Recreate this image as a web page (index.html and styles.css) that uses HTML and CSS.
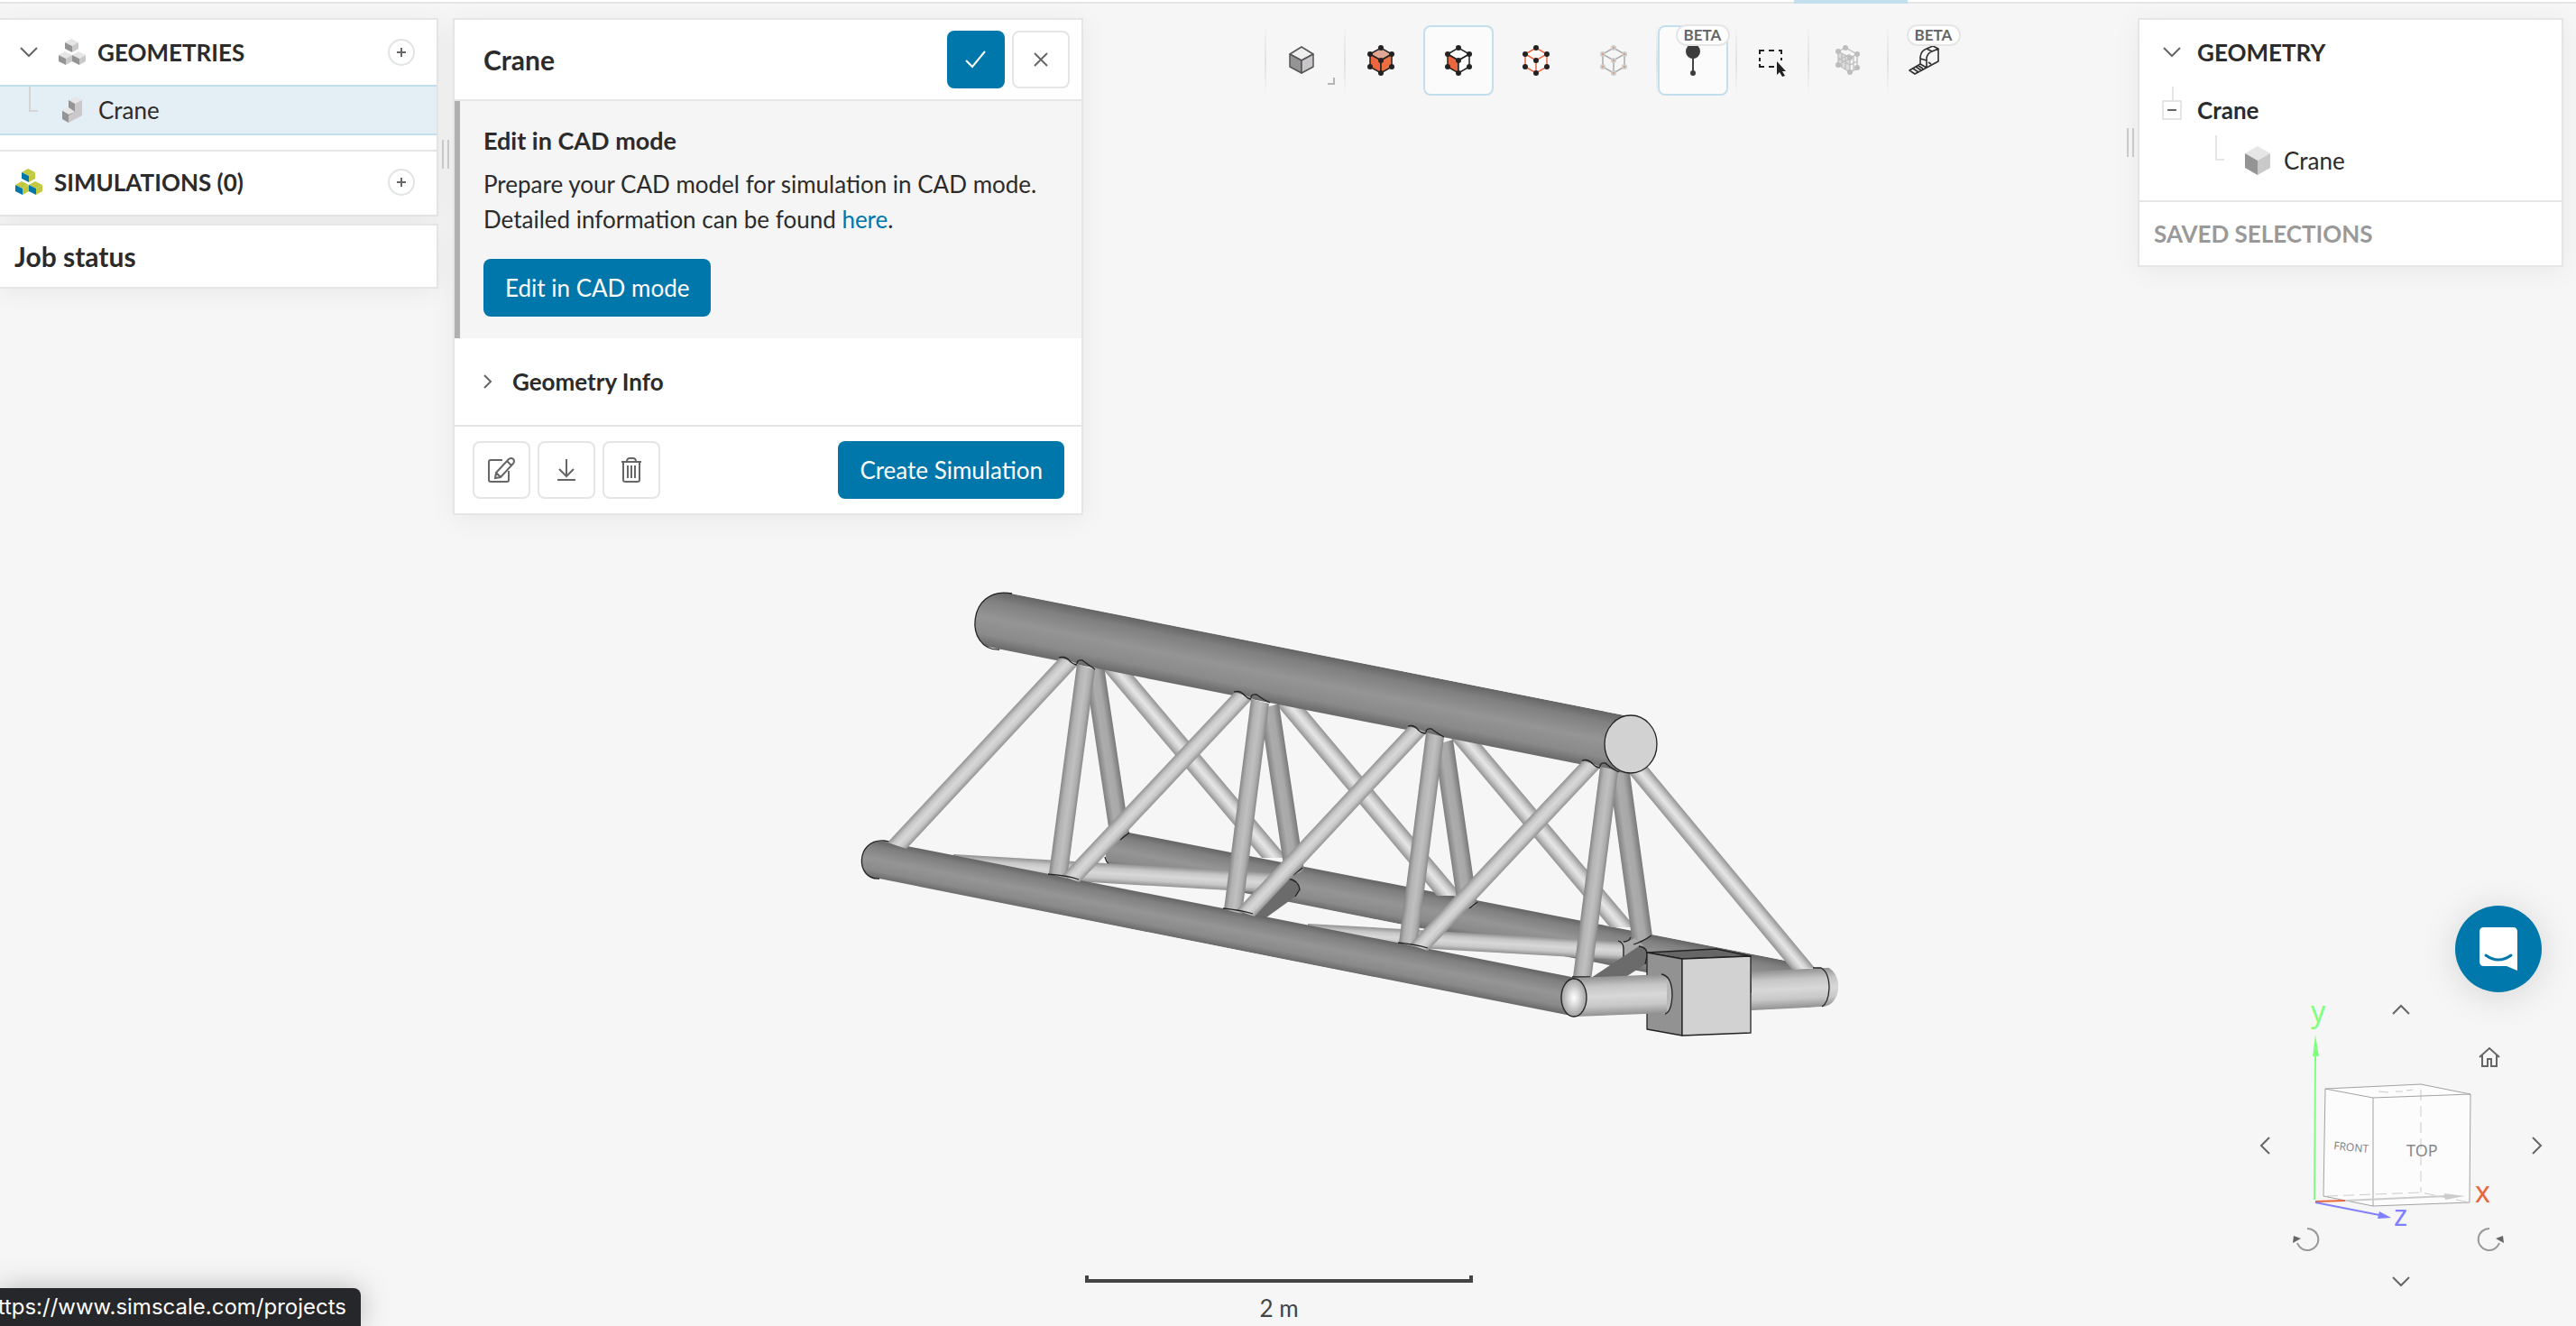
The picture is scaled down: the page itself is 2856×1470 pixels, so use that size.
FILE: index.html
```html
<!DOCTYPE html>
<html lang="en">
<head>
<meta charset="utf-8">
<meta name="viewport" content="width=device-width, initial-scale=1">
<title>Crane - SimScale Workbench</title>
<link rel="stylesheet" href="styles.css">
</head>
<body>
<svg class="defs" aria-hidden="true">
  <defs>
    <g id="cubelet">
      <path d="M0 4 7 0 15 4 8 8z" fill="var(--cube-top)"/>
      <path d="M0 4 8 8V15L0 11z" fill="var(--cube-left)"/>
      <path d="M8 8 15 4V11L8 15z" fill="var(--cube-right)"/>
    </g>
    <g id="cubes">
      <use href="#cubelet" x="7" y="0"/>
      <use href="#cubelet" x="0" y="14"/>
      <use href="#cubelet" x="15" y="14"/>
    </g>
  </defs>
</svg>
<div class="app">
  <header class="topbar"><div class="progress"></div></header>

  <svg class="scene" viewBox="0 0 2856 1470" role="img" aria-label="Crane geometry">
    <defs>
      <linearGradient id="g-dark" x2="0" y2="1">
        <stop offset="0" stop-color="#646464"/><stop offset=".18" stop-color="#808080"/><stop offset=".5" stop-color="#959595"/><stop offset=".8" stop-color="#8a8a8a"/><stop offset="1" stop-color="#696969"/>
      </linearGradient>
      <linearGradient id="g-mid" x2="0" y2="1">
        <stop offset="0" stop-color="#808080"/><stop offset=".35" stop-color="#acacac"/><stop offset=".65" stop-color="#a8a8a8"/><stop offset="1" stop-color="#787878"/>
      </linearGradient>
      <linearGradient id="g-soft" x2="0" y2="1">
        <stop offset="0" stop-color="#868686"/><stop offset=".25" stop-color="#b2b2b2"/><stop offset=".55" stop-color="#c0c0c0"/><stop offset=".8" stop-color="#aeaeae"/><stop offset="1" stop-color="#888"/>
      </linearGradient>
      <linearGradient id="g-light" x2="0" y2="1">
        <stop offset="0" stop-color="#929292"/><stop offset=".25" stop-color="#c6c6c6"/><stop offset=".5" stop-color="#d8d8d8"/><stop offset=".75" stop-color="#c8c8c8"/><stop offset="1" stop-color="#929292"/>
      </linearGradient>
      <linearGradient id="g-bright" x2="0" y2="1">
        <stop offset="0" stop-color="#929292"/><stop offset=".3" stop-color="#cfcfcf"/><stop offset=".5" stop-color="#e6e6e6"/><stop offset=".7" stop-color="#cdcdcd"/><stop offset="1" stop-color="#929292"/>
      </linearGradient>
      <radialGradient id="g-ball">
        <stop offset="0" stop-color="#fff"/><stop offset=".4" stop-color="#dcdcdc"/><stop offset="1" stop-color="#a0a0a0"/>
      </radialGradient>
      <clipPath id="c-upper"><path d="M1122 658C1072 648 1068 722 1108 720L1806 862V794z"/></clipPath>
      <clipPath id="c-front"><path d="M980 932C948 930 948 976 975 974L1747 1128V1083z"/></clipPath>
      <clipPath id="c-rear"><path d="M1240 919 1226 926V950L1230 960 1990 1112V1067z"/></clipPath>
      <clipPath id="c-end"><path d="M1942 1070H2019C2045 1073 2044 1116 2019 1116L1942 1122z"/></clipPath>
      <rect id="t-dark" width="1" height="1" fill="url(#g-dark)"/>
      <rect id="t-mid" width="1" height="1" fill="url(#g-mid)"/>
      <rect id="t-soft" width="1" height="1" fill="url(#g-soft)"/>
      <rect id="t-light" width="1" height="1" fill="url(#g-light)"/>
      <rect id="t-bright" width="1" height="1" fill="url(#g-bright)"/>
    </defs>

    <!-- rear chord -->
    <g clip-path="url(#c-rear)"><use href="#t-dark" transform="matrix(769 150 0 43 1221 917)"/></g>
    <path class="edge" d="M1225 950q1 5 5 9"/>

    <!-- rear verticals and diagonals -->
    <use href="#t-bright" transform="matrix(177 210 -28 0 1250 741)"/>
    <use href="#t-bright" transform="matrix(178 212 -28 0 1443 781)"/>
    <use href="#t-bright" transform="matrix(176 209 -28 0 1637 819)"/>
    <use href="#t-bright" transform="matrix(192 231 -25 2 1820 842)"/>
    <use href="#t-mid" transform="matrix(28 186 21 -6 1203 744)"/>
    <use href="#t-mid" transform="matrix(28 186 21 -6 1397 786)"/>
    <use href="#t-mid" transform="matrix(27 184 21 -6 1590 826)"/>
    <use href="#t-mid" transform="matrix(26 188 22 -8 1784 858)"/>
    <path class="edge" d="M1242 931 1252 923M1434 970 1444 962M1629 1007 1638 1000"/>

    <!-- floor braces -->
    <use href="#t-light" transform="matrix(373 22 0 22 1057 947)"/>
    <path d="M1798 1045q10-2 14-5l10 8-8 14-14 6q-3-10-2-23z" fill="#a8a8a8"/>
    <use href="#t-light" transform="matrix(349 20 0 20 1450 1024)"/>
    <path class="edge" d="M1794 1043q6 2 6 8v13M1800 1044q6 0 8-5M1811 1047q10-3 20-10"/>
    <path d="M1364 1020 1428 974Q1440 976 1441 986L1436 994 1400 1020z" fill="#6b6b6b"/>
    <path class="edge" d="M1428 974Q1440 976 1441 986L1436 994"/>
    <path d="M1764 1084 1817 1049Q1827 1050 1826 1060L1824 1069 1798 1086z" fill="#6b6b6b"/>
    <path class="edge" d="M1817 1049Q1827 1050 1826 1060L1824 1069"/>

    <!-- front chord -->
    <g clip-path="url(#c-front)"><use href="#t-dark" transform="matrix(797 157 0 43 950 927)"/></g>
    <path class="edge" d="M1008 937 980 932C948 930 948 976 975 974"/>

    <!-- upper chord -->
    <g clip-path="url(#c-upper)"><use href="#t-dark" transform="matrix(731 145 0 64 1075 649)"/></g>
    <path class="edge" d="M1122 658C1072 648 1068 722 1108 720"/>
    <ellipse class="face" cx="1808" cy="825" rx="29" ry="32" fill="#d2d2d2"/>

    <!-- front verticals -->
    <use href="#t-soft" transform="matrix(-31 232 20 6 1194 736)"/>
    <use href="#t-soft" transform="matrix(-30 233 20 5 1387 775)"/>
    <use href="#t-soft" transform="matrix(-30 233 20 5 1581 812)"/>
    <use href="#t-soft" transform="matrix(-30 233 20 4 1774 850)"/>
    <!-- front diagonals -->
    <use href="#t-light" transform="matrix(-191 205 21 7 1175 729)"/>
    <use href="#t-light" transform="matrix(-192 204 20 7 1369 767)"/>
    <use href="#t-light" transform="matrix(-191 204 20 7 1562 805)"/>
    <use href="#t-light" transform="matrix(-192 204 20 7 1755 843)"/>
    <path class="edge" d="M1174 729q8-2 12 4 5 4 8 4M1194 736q0-5 6-4 8 6 14 10M1368 767q7-2 12 4 4 4 7 4M1387 774q0-5 6-4 8 6 15 9M1561 805q7-2 11 4 4 4 9 4M1581 812q0-5 6-4 8 6 14 9M1754 843q7-2 12 4 4 4 8 4M1774 850q0-5 6-4 6 6 15 10"/>
    <path class="edge" d="M1162 969q24 2 34 6M1356 1007q20 2 33 6M1550 1045q20 2 33 6M1743 1083h20"/>

    <!-- hook block and cross bar -->
    <path class="face" d="M1826 1056 1903 1052 1941 1060 1865 1063z" fill="#666"/>
    <path class="face" d="M1826 1056 1865 1063V1148L1826 1141z" fill="#929292"/>
    <path class="face" d="M1865 1063 1941 1060V1145L1865 1148z" fill="#d2d2d2"/>
    <path d="M1844 1080Q1854 1085 1854 1104 1853 1122 1844 1124z" fill="#b8b8b8"/>
    <use href="#t-light" transform="matrix(102 -4 0 43 1746 1084)"/>
    <path class="edge" d="M1842 1080Q1854 1082 1854 1104 1853 1122 1846 1124"/>
    <ellipse class="face" cx="1745" cy="1106" rx="14" ry="21" fill="url(#g-ball)"/>
    <g clip-path="url(#c-end)"><use href="#t-light" transform="matrix(100 -5 0 43 1942 1077)"/></g>
    <path class="edge" d="M2010 1073 2019 1073Q2028 1078 2028 1096 2027 1112 2020 1116"/>
  </svg>

  <main class="workspace">
    <aside class="left">
      <nav class="card tree" aria-label="Project tree">
        <div class="row head">
          <button class="toggle" aria-label="Collapse geometries"><svg width="20" height="12"><path d="M1 1 10 10 19 1"/></svg></button>
          <svg class="cubes grey" width="30" height="30"><use href="#cubes"/></svg>
          <h2>GEOMETRIES</h2>
          <button class="add" aria-label="Add geometry"><svg width="12" height="12"><path d="M6 1V11M1 6H11"/></svg></button>
        </div>
        <a class="row selected" href="#crane">
          <span class="branch"></span>
          <svg class="grey part" width="22" height="30"><path d="M7 4 15 0 22 4 14 8z" fill="var(--cube-top)"/><path d="M7 4 14 8V19L8 22 0 18V16L7 13z" fill="var(--cube-left)"/><path d="M14 8 22 4V21L7 29V21L14 17z" fill="var(--cube-right)"/><path d="M0 16 7 12 14 17 7 20z" fill="var(--cube-top)"/><path d="M0 16 7 20V29L0 25z" fill="var(--cube-left)"/></svg>
          <span>Crane</span>
        </a>
        <div class="row sims">
          <svg class="cubes colour" width="30" height="30"><use href="#cubes"/></svg>
          <h2>SIMULATIONS (0)</h2>
          <button class="add" aria-label="Add simulation"><svg width="12" height="12"><path d="M6 1V11M1 6H11"/></svg></button>
        </div>
      </nav>
      <section class="card jobs"><h2>Job status</h2></section>
    </aside>
    <div class="grip grip-left"></div>

    <section class="card details">
      <header class="details-head">
        <h2>Crane</h2>
        <button class="btn primary square" aria-label="Apply"><svg width="26" height="22"><path d="M2 12 9 19 23 2"/></svg></button>
        <button class="btn square" aria-label="Close"><svg width="16" height="16"><path d="M1 1 15 15M15 1 1 15"/></svg></button>
      </header>
      <div class="cad">
        <h3>Edit in CAD mode</h3>
        <p>Prepare your CAD model for simulation in CAD mode. Detailed information can be found <a href="#docs">here</a>.</p>
        <button class="btn primary">Edit in CAD mode</button>
      </div>
      <button class="info"><svg width="10" height="16"><path d="M1 1 8 8 1 15"/></svg>Geometry Info</button>
      <footer class="details-foot">
        <button class="btn square" aria-label="Rename"><svg width="32" height="32"><path d="M17 5H4Q2 5 2 7V27Q2 29 4 29H22Q24 29 24 27V17M9 25 10 19 24 4Q27 2 29 4 31 6 29 9L15 24zM22 6 27 11M10 19 15 24"/></svg></button>
        <button class="btn square" aria-label="Download"><svg width="22" height="26"><path d="M11 1V20M3 12 11 20 19 12M1 24H21"/></svg></button>
        <button class="btn square" aria-label="Delete"><svg width="24" height="28"><path d="M1 5H23M7 5Q7 1 10 1H14Q17 1 17 5M3 5V25Q3 27 5 27H19Q21 27 21 25V5M8 9V23M12 9V23M16 9V23"/></svg></button>
        <button class="btn primary create">Create Simulation</button>
      </footer>
    </section>

    <div class="tools" role="toolbar" aria-label="Viewer tools">
      <div class="group">
        <button class="tool" aria-label="Render mode"><svg width="36" height="36"><g stroke="#555" stroke-width="1.5" stroke-linejoin="round"><path d="M5 11 18 3 31 11 18 18z" fill="#eee"/><path d="M5 11 18 18V32L5 25z" fill="#949494"/><path d="M18 18 31 11V25L18 32z" fill="#c8c6c8"/></g></svg><span class="corner"></span></button>
      </div>
      <div class="group">
        <button class="tool" aria-label="Select volumes"><svg width="36" height="36"><g stroke="#222" stroke-width="1.5"><path d="M6 11 18 4 30 11 18 18z" fill="#e0a794"/><path d="M6 11 18 18V32L6 25z" fill="#ec6640"/><path d="M18 18 30 11V25L18 32z" fill="#ec6e40"/></g><g fill="#222"><circle cx="18" cy="4" r="3"/><circle cx="6" cy="11" r="3"/><circle cx="30" cy="11" r="3"/><circle cx="18" cy="18" r="3"/><circle cx="6" cy="25" r="3"/><circle cx="30" cy="25" r="3"/><circle cx="18" cy="32" r="3"/></g></svg></button>
        <button class="tool active" aria-label="Select faces" aria-pressed="true"><svg width="36" height="36"><g stroke="#222" stroke-width="1.5"><path d="M6 11 18 4 30 11 18 18z" fill="#fff"/><path d="M6 11 18 18V32L6 25z" fill="#ec6640"/><path d="M18 18 30 11V25L18 32z" fill="#fff"/></g><g fill="#222"><circle cx="18" cy="4" r="3"/><circle cx="6" cy="11" r="3"/><circle cx="30" cy="11" r="3"/><circle cx="18" cy="18" r="3"/><circle cx="6" cy="25" r="3"/><circle cx="30" cy="25" r="3"/><circle cx="18" cy="32" r="3"/></g></svg></button>
        <button class="tool" aria-label="Select edges"><svg width="36" height="36"><path d="M6 11 18 4 30 11 18 18zV25L18 32 30 25V11M18 18V32" fill="#fff" stroke="#ec6640" stroke-width="1.5"/><g fill="#222"><circle cx="18" cy="4" r="3"/><circle cx="6" cy="11" r="3"/><circle cx="30" cy="11" r="3"/><circle cx="18" cy="18" r="3"/><circle cx="6" cy="25" r="3"/><circle cx="30" cy="25" r="3"/><circle cx="18" cy="32" r="3"/></g></svg></button>
        <button class="tool" aria-label="Select vertices" disabled><svg width="36" height="36"><path d="M6 11 18 4 30 11 18 18zV25L18 32 30 25V11M18 18V32" fill="none" stroke="#aaa" stroke-width="1.5"/><g fill="#ccc"><circle cx="18" cy="4" r="3"/><circle cx="6" cy="11" r="3"/><circle cx="30" cy="11" r="3"/><circle cx="18" cy="18" r="3"/><circle cx="6" cy="25" r="3"/><circle cx="30" cy="25" r="3"/><circle cx="18" cy="32" r="3"/></g><g fill="#ec8868"><circle cx="18" cy="4" r="1"/><circle cx="6" cy="11" r="1"/><circle cx="30" cy="11" r="1"/><circle cx="18" cy="18" r="1"/><circle cx="6" cy="25" r="1"/><circle cx="30" cy="25" r="1"/><circle cx="18" cy="32" r="1"/></g></svg></button>
      </div>
      <div class="group">
        <button class="tool active" aria-label="Probe point" aria-pressed="true"><svg width="36" height="36"><path d="M18 8V31" stroke="#444" stroke-width="2"/><circle cx="18" cy="8" r="8" fill="#3c3c3c"/><circle cx="18" cy="32" r="3" fill="#3c3c3c"/></svg><span class="beta">BETA</span></button>
      </div>
      <div class="group tight">
        <button class="tool" aria-label="Box selection"><svg width="36" height="36"><path d="M4 11V7H9M14 7H20M25 7H28V11M28 15V18M4 15V19M4 22V25H9M14 25H20" fill="none" stroke="#222" stroke-width="2"/><path d="M23 19V34L26 31 29 36 32 35 29 30H33z" fill="#222"/></svg></button>
      </div>
      <div class="group mesh">
        <button class="tool" aria-label="Mesh display" disabled><svg width="36" height="36"><path d="M7 8 20 15V31L7 23z" fill="#ddd"/><path d="M7 8 15 4 28 11 20 15zV23L20 31 28 27V11M20 15V31M11 10V26M15 12V28M7 15 20 23 28 19M7 18 20 11M24 13V29M7 23 20 16" fill="none" stroke="#bdbdbd" stroke-width="1.3"/><g fill="#bdbdbd"><circle cx="7" cy="8" r="3"/><circle cx="15" cy="4" r="3"/><circle cx="28" cy="11" r="3"/><circle cx="20" cy="15" r="3"/><circle cx="7" cy="23" r="3"/><circle cx="28" cy="26" r="3"/><circle cx="20" cy="31" r="3"/></g></svg></button>
      </div>
      <div class="group tight">
        <button class="tool" aria-label="Measure"><svg width="36" height="36"><path d="M14 23V14Q15 7 21 5L28 2 34 5V19L21 26 14 22 2 29 8 33 21 26V15Q22 10 27 8L34 5M21 5 27 8M14 16 21 18M6 27 12 31M9 25 15 29M12 24 17 27M23 20 26 22" fill="none" stroke="#2f2f2f" stroke-width="1.6" stroke-linejoin="round"/></svg><span class="beta">BETA</span></button>
      </div>
    </div>

    <div class="grip grip-right"></div>
    <aside class="card outline">
      <div class="row head">
        <button class="toggle" aria-label="Collapse geometry"><svg width="20" height="12"><path d="M1 1 10 10 19 1"/></svg></button>
        <h2>GEOMETRY</h2>
      </div>
      <div class="row body"><button class="fold" aria-label="Collapse Crane"></button><h3>Crane</h3></div>
      <a class="row child" href="#solid">
        <span class="branch"></span>
        <svg class="grey" width="28" height="32"><path d="M0 8 14 0 28 8 14 16z" fill="var(--cube-top)"/><path d="M0 8 14 16V32L0 24z" fill="var(--cube-left)"/><path d="M14 16 28 8V24L14 32z" fill="var(--cube-right)"/></svg>
        <span>Crane</span>
      </a>
      <div class="row saved"><h2>SAVED SELECTIONS</h2></div>
    </aside>
  </main>

  <div class="scale"><div class="ruler"></div>2 m</div>

  <div class="orient">
    <svg class="axes" viewBox="0 0 396 380" role="img" aria-label="View orientation">
      <g transform="translate(0 -80)">
        <path d="M118 227 224 222 279 233 278 353 171 357 116 346z" fill="#fcfcfc"/>
        <path d="M224 228V342M120 346 224 342 278 353" fill="none" stroke="#ccc" stroke-dasharray="12 6"/>
        <path d="M118 227 224 222 279 233 171 237zL116 346 171 357 278 353 279 233M171 237V357" fill="none" stroke="#a2a2a2"/>
        <path d="M177 230 188 231M196 230 204 230M208 229 215 228" stroke="#ccc"/>
        <path d="M140 351 252 346" stroke="#ccc" stroke-width="2"/><path d="M250 343 273 346 251 350z" fill="#ccc"/>
        <path d="M107 352 140 351" stroke="#e8673c" stroke-width="2"/>
        <path d="M106 350 107 190" stroke="#80ff80" stroke-width="2"/><path d="M104 191 107 167 111 191z" fill="#80ff80"/>
        <path d="M107 353 178 367" stroke="#8080ff" stroke-width="2"/><path d="M178 363 191 370 176 371z" fill="#8080ff"/>
        <text class="axis" x="102" y="153" fill="#80ff80">y</text>
        <text class="axis" x="284" y="353" fill="#e8673c">x</text>
        <text class="axis" x="194" y="379" fill="#8080ff">z</text>
        <text class="side" x="208" y="302">TOP</text>
        <text class="side small" x="127" y="294" transform="rotate(6 127 294)">FRONT</text>
      </g>
    </svg>
    <button class="nav up" aria-label="Rotate up"><svg width="20" height="12"><path d="M1 11 10 2 19 11"/></svg></button>
    <button class="nav down" aria-label="Rotate down"><svg width="20" height="12"><path d="M1 1 10 10 19 1"/></svg></button>
    <button class="nav west" aria-label="Rotate left"><svg width="12" height="20"><path d="M11 1 2 10 11 19"/></svg></button>
    <button class="nav east" aria-label="Rotate right"><svg width="12" height="20"><path d="M1 1 10 10 1 19"/></svg></button>
    <button class="nav home" aria-label="Home view"><svg width="24" height="24"><path d="M1 12 12 2 23 12M4 9V22H10V14H14V22H20V9"/></svg></button>
    <button class="nav ccw" aria-label="Roll left"><svg width="30" height="28"><path class="thin" d="M16 2A12 12 0 1 1 5 18"/><path class="tip" d="M1 10 9 13 0 18z"/></svg></button>
    <button class="nav cw" aria-label="Roll right"><svg width="30" height="28"><path class="thin" d="M14 2A12 12 0 1 0 25 18"/><path class="tip" d="M29 10 21 13 30 18z"/></svg></button>
  </div>

  <button class="chat" aria-label="Open chat"><svg width="42" height="50"><path d="M5 1H37Q42 1 42 6V49L30 44H5Q0 44 0 39V6Q0 1 5 1z" fill="#fff"/><path d="M7 32Q21 42 35 32" fill="none" stroke="#0078ab" stroke-width="3" stroke-linecap="round"/></svg></button>
  <div class="status">https://www.simscale.com/projects</div>
</div>
</body>
</html>
```
FILE: styles.css
```css
:root {
  --blue: #0077ab;
  --line: #e5e5e5;
  --text: #2b2b2b;
  --cube-top: #e6e6e6;
  --cube-left: #949494;
  --cube-right: #cac8ca;
}

* { box-sizing: border-box; }

body {
  margin: 0;
  background: #f6f6f6;
  color: var(--text);
  font: 26px/39px Lato, "Liberation Sans", sans-serif;
}

h2, h3, p { margin: 0; font-size: 26px; }
h2, h3 { font-weight: 700; }
a { color: inherit; text-decoration: none; }
svg { display: block; flex: none; }

button {
  padding: 0;
  border: 0;
  background: none;
  color: inherit;
  font: inherit;
  cursor: pointer;
}

button svg { fill: none; stroke: #666; stroke-width: 2; }

.defs { position: absolute; width: 0; height: 0; }

.app {
  position: relative;
  min-height: 100vh;
  overflow: hidden;
}

.topbar {
  height: 4px;
  background: #fff;
  border-bottom: 2px solid var(--line);
}

.progress {
  width: 126px;
  height: 4px;
  margin-left: 69.65%;
  background: #c3dfee;
}

.scene {
  position: absolute;
  inset: 0;
  width: 100%;
  height: 100%;
}

.edge { fill: none; stroke: #222; stroke-width: 1.3; }
.face { stroke: #222; stroke-width: 1.3; stroke-linejoin: round; }

.workspace {
  position: relative;
  display: flex;
  align-items: flex-start;
  padding: 16px 14px 0 0;
}

.card {
  background: #fff;
  border: 2px solid var(--line);
  box-shadow: 0 4px 28px rgba(0, 0, 0, .06);
}

.left {
  flex: none;
  display: flex;
  flex-direction: column;
  gap: 8px;
  width: 486px;
}

.left .card { border-left: 0; }

.row {
  display: flex;
  align-items: center;
  height: 56px;
}

.row.head { height: 72px; }

.toggle { width: 20px; }

.tree .head { padding: 0 24px 0 22px; }
.tree .cubes { margin: 0 13px 0 23px; }
.tree .add { margin-left: auto; }

.grey { --cube-top: #e6e6e6; }
.colour {
  --cube-top: #c2c940;
  --cube-left: #0077ab;
  --cube-right: #c2c940;
}

.add {
  display: grid;
  place-items: center;
  width: 30px;
  height: 30px;
  border: 2px solid #e0e4e4;
  border-radius: 50%;
}

.branch {
  align-self: flex-start;
  width: 10px;
  height: 28px;
  border: solid #d5d5d5;
  border-width: 0 0 2px 2px;
}

.selected {
  padding-left: 32px;
  background: #e3eef5;
  border: solid #c3dfee;
  border-width: 2px 0;
}

.selected .part { margin: 0 18px 0 27px; }

.tree .sims {
  height: 72px;
  margin-top: 16px;
  padding: 0 24px 2px 17px;
  border-top: 2px solid var(--line);
}

.tree .sims .cubes { margin: 0 13px 0 0; }

.jobs { padding: 15px 16px 14px; }
.jobs h2 { font-size: 30px; }

.grip {
  flex: none;
  width: 8px;
  height: 32px;
  border: solid #ccc;
  border-width: 0 2px;
}

.grip-left { margin: 135px 4px 0; }
.grip-right { margin: 122px 4px 0; }

.details { flex: none; width: 699px; }

.details-head {
  display: flex;
  align-items: center;
  gap: 8px;
  height: 90px;
  padding: 0 13px 0 32px;
  border-bottom: 2px solid var(--line);
}

.details-head h2 { flex: 1; font-size: 30px; }

.btn {
  display: grid;
  place-items: center;
  height: 64px;
  padding: 0 24px;
  border: 2px solid var(--line);
  border-radius: 8px;
  background: #fff;
}

.btn.square { width: 64px; padding: 0; }

.btn.primary {
  border: 0;
  background: var(--blue);
  color: #fff;
}

.primary svg { stroke: #fff; }

.cad {
  padding: 24px 24px 24px 26px;
  border-left: 6px solid #b0b0b0;
  background: #f5f5f5;
}

.cad h3 { font-size: 27px; }
.cad p { margin: 10px 0 24px; }
.cad a { color: var(--blue); }

.info {
  display: flex;
  align-items: center;
  gap: 22px;
  width: 100%;
  height: 96px;
  padding-left: 32px;
  font-weight: 700;
}

.details-foot {
  display: flex;
  gap: 8px;
  padding: 16px 19px 16px 20px;
  border-top: 2px solid var(--line);
}

.create { margin-left: auto; }

.tools {
  flex: 1;
  display: flex;
  justify-content: center;
  padding: 8px 0 0 18px;
}

.group {
  display: flex;
  gap: 8px;
  padding-right: 8px;
  border-left: 2px solid transparent;
  border-image: linear-gradient(transparent, #e2e2e2 50%, transparent) 1;
}

.group.tight { padding-right: 0; }
.group.mesh { padding: 0 4px; }

.tool {
  position: relative;
  display: grid;
  place-items: center;
  width: 78px;
  height: 78px;
  border: 2px solid transparent;
  border-radius: 8px;
}

.tool svg { stroke: none; }

.tool.active {
  border-color: #c3dfee;
  background: #fbfbfb;
}

.corner {
  position: absolute;
  right: 0;
  bottom: 10px;
  width: 8px;
  height: 8px;
  border: solid #b5b5b5;
  border-width: 0 2px 2px 0;
}

.beta {
  position: absolute;
  top: -3px;
  right: -4px;
  width: 60px;
  height: 24px;
  border: 2px solid var(--line);
  border-radius: 12px;
  background: #fff;
  color: #666;
  font-size: 17px;
  font-weight: 700;
  line-height: 20px;
  text-align: center;
}

.outline { flex: none; width: 472px; }
.outline .head { gap: 18px; padding-left: 26px; }

.body { gap: 17px; padding-left: 25px; }

.fold {
  position: relative;
  width: 22px;
  height: 22px;
  border: 2px solid var(--line);
}

.fold::before,
.fold::after {
  content: "";
  position: absolute;
  background: #666;
}

.fold::before { top: 8px; left: 4px; width: 10px; height: 2px; }
.fold::after { top: -17px; left: 9px; width: 2px; height: 15px; background: var(--line); }

.child { padding-left: 84px; }
.child .branch { border-color: var(--line); }
.child svg { margin: 0 15px 0 23px; }

.saved {
  height: 72px;
  margin-top: 16px;
  padding-left: 16px;
  border-top: 2px solid var(--line);
  color: #999;
}

.scale {
  position: absolute;
  left: 50%;
  bottom: 0;
  width: 430px;
  margin-left: -225px;
  color: #444;
  text-align: center;
}

.ruler {
  height: 8px;
  margin-bottom: 9px;
  border: solid #444;
  border-width: 0 4px 4px;
}

.orient {
  position: absolute;
  right: 0;
  bottom: 30px;
  width: 396px;
  height: 380px;
}

.axes { width: 396px; height: 380px; }
.axis { font: 32px "Noto Sans", sans-serif; }
.side { fill: #888; font: 18px "Noto Sans", sans-serif; }
.side.small { font-size: 12px; }

.nav { position: absolute; }
.nav .thin { stroke: #999; }
.nav .tip { fill: #666; stroke: none; }
.up { left: 192px; top: 53px; }
.down { left: 192px; top: 355px; }
.west { left: 45px; top: 200px; }
.east { left: 347px; top: 200px; }
.home { left: 288px; top: 100px; }
.ccw { left: 82px; top: 300px; }
.cw { left: 286px; top: 300px; }

.chat {
  position: absolute;
  right: 38px;
  bottom: 370px;
  display: grid;
  place-items: center;
  width: 96px;
  height: 96px;
  border-radius: 50%;
  background: #0078ab;
  box-shadow: 0 4px 40px rgba(0, 0, 0, .14);
}

.chat svg { stroke: none; }

.status {
  position: absolute;
  left: 0;
  bottom: 0;
  display: flex;
  justify-content: flex-end;
  width: 400px;
  height: 42px;
  padding-right: 16px;
  overflow: hidden;
  border-top-right-radius: 8px;
  background: #26272a;
  box-shadow: 0 0 32px rgba(0, 0, 0, .25);
  color: #fff;
  font: 24px/42px Inter, sans-serif;
}
```
